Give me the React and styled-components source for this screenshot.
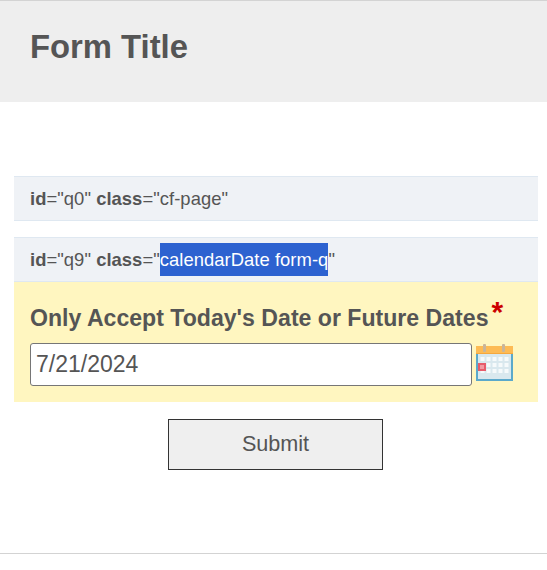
import styled, { createGlobalStyle } from "styled-components";

const GlobalStyle = createGlobalStyle`
  html, body {
    margin: 0;
    padding: 0;
    background: #fff;
    font-family: "Liberation Sans", Arial, sans-serif;
    color: #555;
  }
  * { box-sizing: border-box; }
`;

const Page = styled.div`
  width: 547px;
  height: 570px;
  overflow: hidden;
`;

const Header = styled.header`
  height: 102px;
  padding: 27px 30px 0;
  background: #eee;
  border-top: 1px solid #d3d3d3;
`;

const Title = styled.h1`
  margin: 0;
  font-size: 32.8px;
  line-height: 37px;
  font-weight: bold;
  color: #555;
`;

const Form = styled.form`
  margin: 74px 9px 0 14px;
  height: 377px;
`;

const InfoBar = styled.div`
  height: 45px;
  margin-top: ${(p) => p.$gap || 0}px;
  padding: 0 16px;
  display: flex;
  align-items: center;
  background: #eff2f6;
  border-top: 1px solid #dfe8f1;
  border-bottom: 1px solid #dfe8f1;
  font-size: 18.4px;
  letter-spacing: 0.05px;
  white-space: pre;
`;

const Selected = styled.span`
  display: inline-block;
  height: 33px;
  line-height: 33px;
  background: #2d62d0;
  color: #fff;
`;

const Question = styled.div`
  height: 120px;
  padding: 18px 16px 0;
  background: #fff6c0;
`;

const Label = styled.label`
  display: flex;
  align-items: flex-start;
  height: 43px;
  font-size: 23.1px;
  line-height: 36px;
  font-weight: bold;
  color: #555;
`;

const Required = styled.span`
  margin-left: 3px;
  margin-top: -6px;
  font-size: 30px;
  line-height: 36px;
  color: #c00;
`;

const DateRow = styled.div`
  display: flex;
  align-items: center;
`;

const DateInput = styled.input`
  width: 442px;
  height: 43px;
  padding: 0 5px;
  background: #fff;
  border: 1px solid #767676;
  border-radius: 3px;
  font-family: inherit;
  font-size: 23px;
  color: #555;
  outline: none;
`;

const CalendarIcon = styled.svg`
  display: block;
  margin: -4px 0 0 4px;
  width: 37px;
  height: 37px;
`;

const Actions = styled.div`
  display: flex;
  justify-content: center;
  padding: 17px 1px 0 0;
`;

const SubmitButton = styled.button`
  width: 215px;
  height: 51px;
  padding: 0 0 2px;
  background: #efefef;
  border: 1px solid #333;
  font-family: inherit;
  font-size: 21.6px;
  color: #555;
`;

const FooterLine = styled.hr`
  margin: 0;
  border: 0;
  border-top: 1px solid #d3d3d3;
`;

const cells = [];
for (let row = 0; row < 3; row++) {
  for (let col = 0; col < 5; col++) {
    cells.push([4.5 + col * 6, 13 + row * 6]);
  }
}

const Calendar = () => (
  <CalendarIcon viewBox="0 0 37 37">
    <rect x="0" y="10" width="37" height="27" fill="#5ba9cb" />
    <rect x="2" y="10" width="33" height="25" fill="#d9e8ee" />
    {cells.map(([x, y]) => (
      <rect key={`${x}-${y}`} x={x} y={y} width="4" height="4" fill="#f6fafb" />
    ))}
    <rect x="2" y="19" width="8" height="8" fill="#e75c6c" />
    <rect x="4" y="21" width="4" height="4" fill="#f29aa3" />
    <rect x="0" y="2" width="37" height="8" fill="#fdbb55" />
    <rect x="0" y="9" width="37" height="1" fill="#f5a83e" />
    <rect x="7" y="0" width="3" height="8" rx="1" fill="#c8b59a" />
    <rect x="26" y="0" width="3" height="8" rx="1" fill="#c8b59a" />
  </CalendarIcon>
);

const App = () => (
  <Page>
    <GlobalStyle />
    <Header>
      <Title>Form Title</Title>
    </Header>
    <Form onSubmit={(e) => e.preventDefault()}>
      <InfoBar>
        <b>id</b>="q0" <b>class</b>="cf-page"
      </InfoBar>
      <InfoBar $gap={16}>
        <b>id</b>="q9" <b>class</b>="<Selected>calendarDate form-q</Selected>"
      </InfoBar>
      <Question>
        <Label>
          Only Accept Today's Date or Future Dates
          <Required>*</Required>
        </Label>
        <DateRow>
          <DateInput defaultValue="7/21/2024" />
          <Calendar />
        </DateRow>
      </Question>
      <Actions>
        <SubmitButton type="submit">Submit</SubmitButton>
      </Actions>
    </Form>
    <FooterLine />
  </Page>
);

export default App;
